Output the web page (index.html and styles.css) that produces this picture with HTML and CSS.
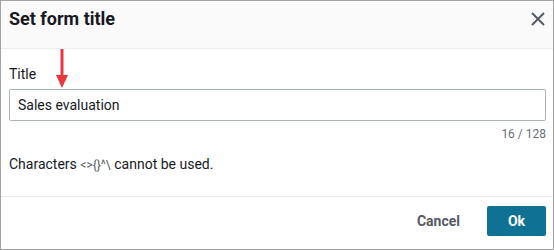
FILE: index.html
```html
<!DOCTYPE html>
<html lang="en">
<head>
    <meta charset="UTF-8">
    <title>Set form title</title>
    <link rel="stylesheet" href="styles.css">
</head>
<body>
    <div class="modal">
        <div class="modal-header">
            <h2 class="modal-title">Set form title</h2>
            <button class="close-button" aria-label="Close">
                <svg width="14" height="14" viewBox="0 0 14 14">
                    <path d="M1 1 L13 13 M13 1 L1 13" stroke="#545b64" stroke-width="2" fill="none"/>
                </svg>
            </button>
        </div>

        <div class="modal-body">
            <label class="field-label" for="formTitle">Title</label>
            <input class="text-input" id="formTitle" type="text" value="Sales evaluation">
            <div class="counter">16 / 128</div>
            <p class="hint">Characters <span class="chars">&lt;&gt;{}^\</span> cannot be used.</p>

            <svg class="callout-arrow" width="14" height="40" viewBox="0 0 14 40">
                <path d="M7 0 L7 28" stroke="#e8373e" stroke-width="3"/>
                <path d="M1 26 L13 26 L7 39 Z" fill="#e8373e"/>
            </svg>
        </div>

        <div class="modal-footer">
            <button class="btn btn-link">Cancel</button>
            <button class="btn btn-primary">Ok</button>
        </div>
    </div>
</body>
</html>
```

FILE: styles.css
```css
body, html {
    margin: 0;
    background: #ffffff;
}

.modal {
    box-sizing: border-box;
    width: 554px;
    height: 250px;
    border: 1px solid #a3a3a3;
    display: flex;
    flex-direction: column;
    font-family: Roboto, "Noto Sans", sans-serif;
    color: #16191f;
    background: #ffffff;
}

.modal-header {
    height: 48px;
    flex-shrink: 0;
    background: #fafafa;
    border-bottom: 1px solid #eaeded;
    display: flex;
    align-items: center;
    justify-content: space-between;
    padding: 0 8px 12px 8px;
    box-sizing: border-box;
}

.modal-title {
    margin: 0;
    font-size: 18px;
    font-weight: 700;
}

.close-button {
    border: none;
    background: none;
    padding: 0;
    display: flex;
}

.modal-body {
    position: relative;
    flex: 1;
    padding: 15px 7px 0 8px;
    border-bottom: 1px solid #eaeded;
}

.field-label {
    display: block;
    font-size: 14px;
    line-height: 20px;
    margin-bottom: 5px;
}

.text-input {
    box-sizing: border-box;
    width: 100%;
    height: 32px;
    border: 1px solid #aab7b8;
    border-radius: 2px;
    padding: 0 8px;
    font-family: inherit;
    font-size: 14px;
    color: #16191f;
}

.counter {
    text-align: right;
    font-size: 12px;
    line-height: 18px;
    color: #687078;
    margin-top: 4px;
}

.hint {
    margin: 11px 0 0 0;
    font-size: 14px;
    line-height: 20px;
    color: #16191f;
}

.chars {
    font-size: 12px;
    color: #545b64;
}

.callout-arrow {
    position: absolute;
    left: 54px;
    top: 0;
}

.modal-footer {
    height: 48px;
    flex-shrink: 0;
    display: flex;
    justify-content: flex-end;
    align-items: center;
    gap: 7px;
    padding: 0 7px 4px 0;
}

.btn {
    font-family: inherit;
    font-size: 14px;
    font-weight: 700;
    border: none;
    border-radius: 2px;
    height: 30px;
    padding: 0 20px;
}

.btn-link {
    background: none;
    color: #545b64;
}

.btn-primary {
    background: #0f7194;
    color: #ffffff;
    min-width: 59px;
}
```
